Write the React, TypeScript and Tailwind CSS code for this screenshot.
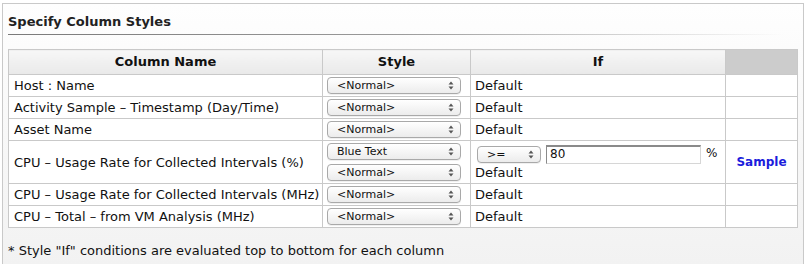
const FONT = "font-['DejaVu_Sans','Liberation_Sans',sans-serif]";

const rows = [
  { name: "Host : Name", styles: ["<Normal>"] },
  { name: "Activity Sample - Timestamp (Day/Time)", styles: ["<Normal>"] },
  { name: "Asset Name", styles: ["<Normal>"] },
  { name: "CPU - Usage Rate for Collected Intervals (%)", styles: ["Blue Text", "<Normal>"], cond: true },
  { name: "CPU - Usage Rate for Collected Intervals (MHz)", styles: ["<Normal>"] },
  { name: "CPU - Total - from VM Analysis (MHz)", styles: ["<Normal>"] },
];

function Arrows() {
  return (
    <svg width="6" height="9" viewBox="0 0 6 9" className="shrink-0">
      <path d="M3 0.5 L5.5 3.5 H0.5 Z" fill="#555" />
      <path d="M3 8.5 L5.5 5.5 H0.5 Z" fill="#555" />
    </svg>
  );
}

function FakeSelect({ label, width }: { label: string; width: string }) {
  return (
    <div
      className={`${width} h-[17px] flex items-center justify-between pl-[9px] pr-[6px] rounded-[4px] border border-[#a9a9a9] bg-gradient-to-b from-white to-[#ececec] shadow-[0_1px_0_rgba(0,0,0,0.06)] text-[11px] text-[#111] leading-none`}
    >
      <span>{label}</span>
      <Arrows />
    </div>
  );
}

export default function App() {
  return (
    <div className={`${FONT} w-[805px] h-[264px] bg-white pt-[3px] pl-[2px] pr-[1px]`}>
      <div className="h-[261px] border-x border-t border-[#c9c9c9] bg-gradient-to-b from-[#fefefe] to-[#f2f2f2] px-[5px]">
        <div className="pt-[10px] text-[13px] font-bold text-[#222] leading-[16px]">Specify Column Styles</div>
        <div className="mt-[4px] h-[1px] w-[776px] bg-gradient-to-r from-[#7a7a7a] via-[#9a9a9a] to-transparent" />
        <table className="mt-[14px] w-[790px] border-collapse bg-white text-[13px] text-[#111]">
          <thead>
            <tr className="h-[25px]">
              <th className="w-[314px] border border-[#c9c9c9] bg-gradient-to-b from-[#f7f7f7] to-[#e9e9e9] font-bold">
                Column Name
              </th>
              <th className="w-[148px] border border-[#c9c9c9] bg-gradient-to-b from-[#f7f7f7] to-[#e9e9e9] font-bold">
                Style
              </th>
              <th className="w-[255px] border border-[#c9c9c9] bg-gradient-to-b from-[#f7f7f7] to-[#e9e9e9] font-bold">
                If
              </th>
              <th className="border border-[#c9c9c9] bg-[#cccccc]" />
            </tr>
          </thead>
          <tbody>
            {rows.map((r) => (
              <tr key={r.name} className={r.cond ? "h-[43px]" : "h-[22px]"}>
                <td className="border border-[#c9c9c9] pl-[5px] leading-[15px]">{r.name.replace(/ - /g, " \u2013 ")}</td>
                <td className="border border-[#c9c9c9] pl-[4px]">
                  <div className="flex flex-col gap-[4px]">
                    {r.styles.map((s) => (
                      <FakeSelect key={s} label={s} width="w-[134px]" />
                    ))}
                  </div>
                </td>
                <td className="border border-[#c9c9c9] pl-[4px]">
                  {r.cond ? (
                    <div className="flex flex-col">
                      <div className="flex items-center gap-[5px] pl-[2px] pt-[1px]">
                        <FakeSelect label=">=" width="w-[64px]" />
                        <div className="w-[155px] h-[19px] border border-[#d6d6d6] border-t-[#8a8a8a] border-l-[#8a8a8a] border-t-2 bg-white pl-[3px] text-[12px] leading-[15px]">
                          80
                        </div>
                        <span className="text-[12px] -mt-[2px]">%</span>
                      </div>
                      <div className="leading-[16px] mt-[1px]">Default</div>
                    </div>
                  ) : (
                    <span className="leading-[15px]">Default</span>
                  )}
                </td>
                <td className="border border-[#c9c9c9] text-center">
                  {r.cond && <span className="font-bold text-[12px] text-[#1c1cdc]">Sample</span>}
                </td>
              </tr>
            ))}
          </tbody>
        </table>
        <div className="mt-[15px] text-[13px] text-[#111] leading-[16px]">
          * Style "If" conditions are evaluated top to bottom for each column
        </div>
      </div>
    </div>
  );
}
